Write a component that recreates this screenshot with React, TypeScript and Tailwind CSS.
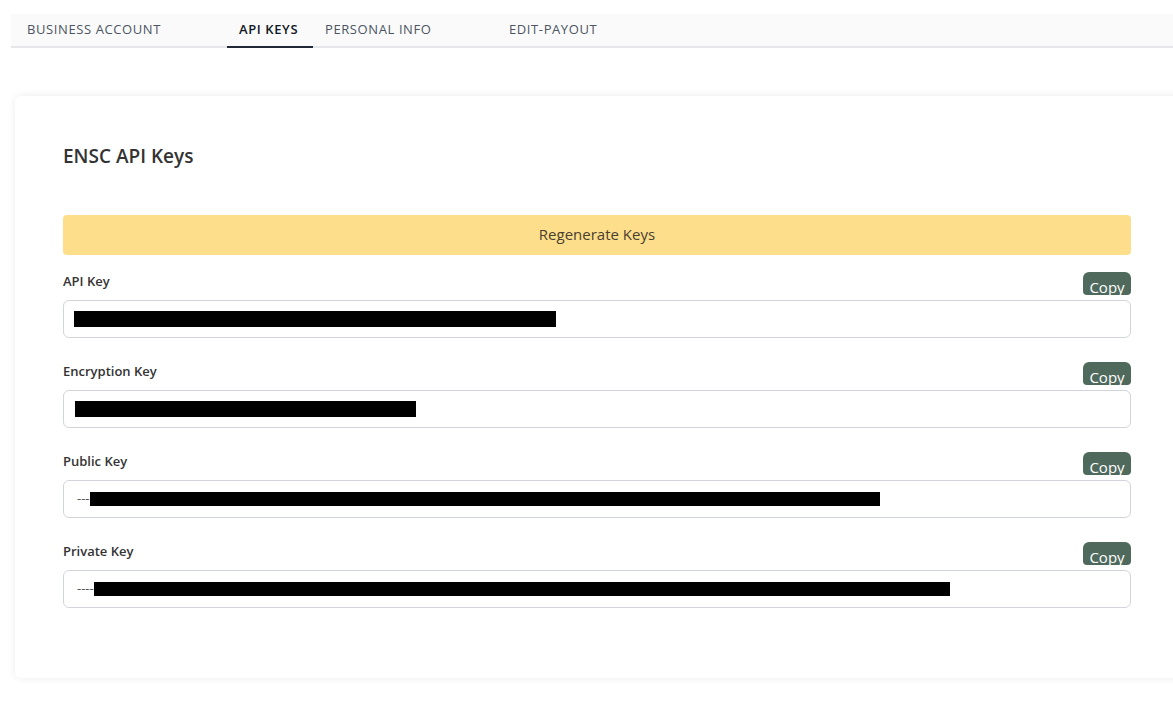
import React from 'react';

const tabs = [
  { t: 'BUSINESS ACCOUNT', w: 'w-[212px]' },
  { t: 'API KEYS', w: 'w-[86px]' },
  { t: 'PERSONAL INFO', w: 'w-[184px]' },
  { t: 'EDIT-PAYOUT', w: 'w-[160px]' },
];

const fields = [
  { label: 'API Key', prefix: '', pad: 'pl-[10px]', bar: 'w-[482px] h-[16px]' },
  { label: 'Encryption Key', prefix: '', pad: 'pl-[11px]', bar: 'w-[341px] h-[16px]' },
  { label: 'Public Key', prefix: '---', pad: 'pl-[13px]', bar: 'w-[790px] h-[14px]' },
  { label: 'Private Key', prefix: '----', pad: 'pl-[13px]', bar: 'w-[856px] h-[14px]' },
];

export default function App() {
  return (
    <div className="min-h-[704px] bg-white pt-[14px] overflow-hidden" style={{ fontFamily: '"Open Sans", "Noto Sans", sans-serif' }}>
      <div className="ml-[11px] flex h-[34px] items-stretch border-b-2 border-[#e5e7eb] bg-[#fafafa] pl-[4px]">
        {tabs.map((tab, i) => (
          <div
            key={tab.t}
            className={`flex items-center px-3 text-[13px] tracking-[0.6px] ${tab.w} ${
              i === 1 ? 'mb-[-2px] border-b-2 border-[#1f2937] font-semibold text-[#111827]' : 'text-[#4b5563]'
            }`}
          >
            {tab.t}
          </div>
        ))}
      </div>

      <div className="ml-[15px] mt-[48px] w-[1170px] rounded-md bg-white pl-[48px] pr-[50px] pt-[46px] pb-[46px] shadow-[0_0_8px_rgba(0,0,0,0.08)]">
        <h2 className="text-[19px] font-semibold text-[#333]">ENSC API Keys</h2>
        <button className="mt-[44px] flex h-[40px] w-[1068px] items-center justify-center rounded bg-[#fddf8b] text-[15px] font-medium text-[#4a4030]">
          Regenerate Keys
        </button>
        <div className="mt-[17px] w-[1068px]">
          {fields.map((f) => (
            <div key={f.label} className="mb-[24px]">
              <div className="flex items-end justify-between">
                <span className="mb-[3px] text-[13px] font-semibold text-[#333]">{f.label}</span>
                <div className="flex h-[23px] w-[48px] items-start justify-center overflow-hidden rounded-t-md rounded-b-sm bg-[#4f6a5d]">
                  <span className="mt-[6px] text-[15px] leading-[18px] text-white">Copy</span>
                </div>
              </div>
              <div className={`mt-[5px] flex h-[38px] items-center rounded-md border border-[#d1d5db] ${f.pad}`}>
                {f.prefix && <span className="text-[13px] text-[#555]">{f.prefix}</span>}
                <span className={`block bg-black ${f.bar}`} />
              </div>
            </div>
          ))}
        </div>
      </div>
    </div>
  );
}
